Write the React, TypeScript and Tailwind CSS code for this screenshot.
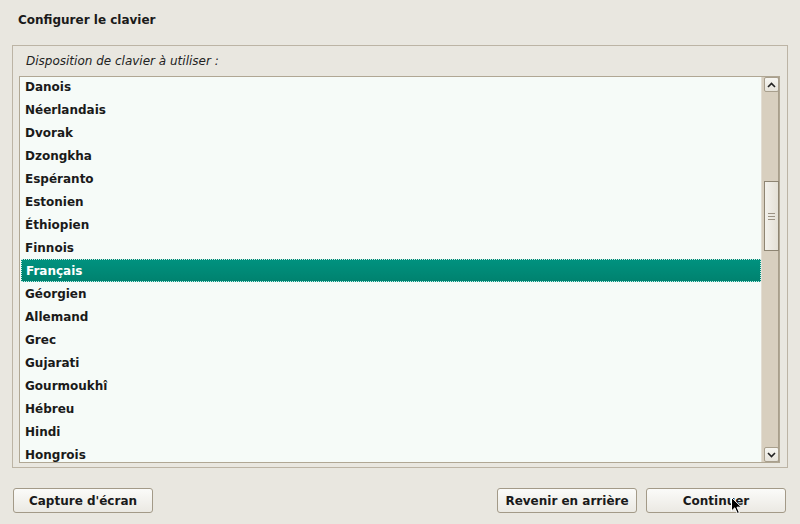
import React from "react";

const layouts = [
  "Danois",
  "Néerlandais",
  "Dvorak",
  "Dzongkha",
  "Espéranto",
  "Estonien",
  "Éthiopien",
  "Finnois",
  "Français",
  "Géorgien",
  "Allemand",
  "Grec",
  "Gujarati",
  "Gourmoukhî",
  "Hébreu",
  "Hindi",
  "Hongrois",
];

const selected = "Français";

function Chevron({ up }: { up?: boolean }) {
  return (
    <svg width="9" height="6" viewBox="0 0 9 6" className={up ? "" : "rotate-180"}>
      <path d="M1 5 L4.5 1.5 L8 5" fill="none" stroke="#222" strokeWidth="1.6" />
    </svg>
  );
}

function ScrollButton({ up }: { up?: boolean }) {
  return (
    <div className="flex h-[15px] w-[15px] items-center justify-center rounded-[2px] border border-[#a89f8d] bg-gradient-to-b from-[#f7f6f2] to-[#e6e3da]">
      <Chevron up={up} />
    </div>
  );
}

function Button({ label, className }: { label: string; className?: string }) {
  return (
    <button
      type="button"
      className={`flex h-[25px] w-[140px] items-center justify-center rounded-[3px] border border-[#a39a88] bg-gradient-to-b from-[#fbfbf9] to-[#ebe9e3] text-[12px] font-bold text-[#1a1a1a] ${className ?? ""}`}
    >
      {label}
    </button>
  );
}

export default function App() {
  return (
    <div className="relative flex h-[524px] w-[800px] flex-col bg-[#e9e7e0] font-['DejaVu_Sans',sans-serif] text-[#1a1a1a]">
      <div className="flex h-[40px] items-center pl-[18px] text-[12px] font-bold">
        Configurer le clavier
      </div>

      <div className="mx-[12px] mt-[5px] flex h-[423px] flex-col border border-[#bcb4a5] pl-[6px] pr-[7px]">
        <div className="flex h-[30px] items-center pl-[7px] text-[12px] italic text-[#222]">
          Disposition de clavier à utiliser :
        </div>
        <div className="flex h-[387px] border border-[#b0a794] bg-[#f6fbf8]">
          <div className="flex-1 overflow-hidden pl-[1px]">
            <div className="-mt-[2px]">
              {layouts.map((name) => {
                const active = name === selected;
                return (
                  <div
                    key={name}
                    className={`flex h-[23px] items-center pl-[4px] text-[12px] font-bold ${
                      active
                        ? "border border-dotted border-[#c9ede6] bg-gradient-to-b from-[#00927f] to-[#00826f] pl-[3px] text-white"
                        : ""
                    }`}
                  >
                    {name}
                  </div>
                );
              })}
            </div>
          </div>
          <div className="flex w-[18px] flex-col border-l border-[#e2ddd3] bg-[#d8cfbf] pl-[2px] pr-[1px] shadow-[inset_-1px_0_0_#a89e8b]">
            <ScrollButton up />
            <div className="flex-1">
              <div className="mt-[89px] flex h-[70px] w-[15px] flex-col items-center justify-center gap-[2px] border border-[#8e8573] bg-gradient-to-r from-[#f3f1ec] to-[#e4e0d6]">
                <div className="h-[1px] w-[7px] bg-[#9b9283]" />
                <div className="h-[1px] w-[7px] bg-[#9b9283]" />
                <div className="h-[1px] w-[7px] bg-[#9b9283]" />
              </div>
            </div>
            <ScrollButton />
          </div>
        </div>
      </div>

      <div className="mt-[20px] flex pl-[13px] pr-[14px]">
        <Button label="Capture d'écran" />
        <div className="flex-1" />
        <Button label="Revenir en arrière" />
        <Button label="Continuer" className="ml-[9px] border-[#8a8272]" />
      </div>

      <svg
        className="absolute left-[731px] top-[497px]"
        width="12"
        height="18"
        viewBox="0 0 12 18"
      >
        <path d="M0.5 0.5 L0.5 14 L3.8 10.8 L6.3 16.5 L8.4 15.6 L6 10.2 L10.5 10.2 Z" fill="#000" stroke="#fff" strokeWidth="1" />
      </svg>
    </div>
  );
}
